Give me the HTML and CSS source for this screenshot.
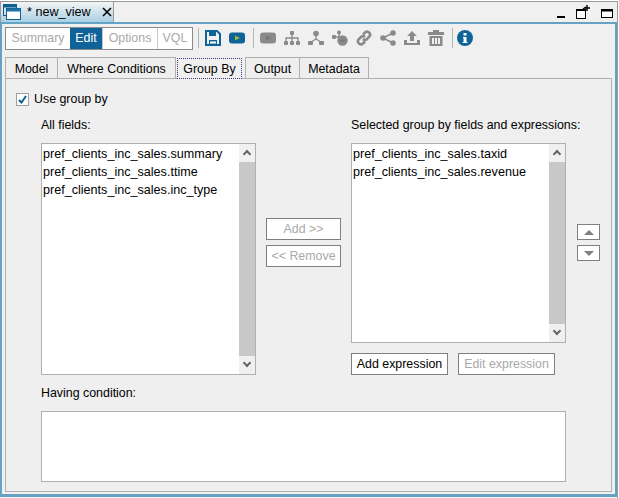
FILE: index.html
```html
<!DOCTYPE html>
<html lang="en">
<head>
    <meta charset="UTF-8">
    <title>new_view</title>
    <link rel="stylesheet" href="styles.css">
</head>
<body>
    <div class="window">
        <div class="title-bar">
            <div class="doc-tab">
                <svg class="doc-icon" width="18" height="18" viewBox="0 0 18 18">
                    <rect x="0.5" y="1.5" width="13" height="11" fill="#cfe3ee" stroke="#0f5f93"/>
                    <rect x="0.5" y="1.5" width="13" height="3" fill="#0f5f93"/>
                    <rect x="3.5" y="5.5" width="14" height="11" fill="#ffffff" stroke="#0f5f93"/>
                    <rect x="3.5" y="5.5" width="14" height="3" fill="#1d6fa5"/>
                </svg>
                <span class="doc-name">* new_view</span>
                <svg class="doc-close" width="10" height="10" viewBox="0 0 10 10">
                    <path d="M1 1 L9 9 M9 1 L1 9" stroke="#000" stroke-width="1.6"/>
                </svg>
            </div>
            <div class="win-controls">
                <svg width="9" height="4" viewBox="0 0 9 4"><rect y="1" width="8" height="2" fill="#000"/></svg>
                <svg width="15" height="14" viewBox="0 0 15 14">
                    <rect x="0.5" y="4.5" width="9" height="9" fill="#fff" stroke="#000"/>
                    <rect x="0" y="4" width="10" height="2" fill="#000"/>
                    <path d="M8 3 H14 M11 0 V6 M7 4 L10 2" stroke="#000" stroke-width="1.4"/>
                </svg>
                <svg width="12" height="10" viewBox="0 0 12 10">
                    <rect x="0.5" y="0.5" width="11" height="8" fill="#fff" stroke="#000"/>
                    <rect x="0" y="0" width="12" height="2.5" fill="#000"/>
                </svg>
            </div>
        </div>

        <div class="view">
            <div class="toolbar">
                <div class="modes">
                    <span class="mode mode-summary">Summary</span>
                    <span class="mode mode-edit active">Edit</span>
                    <span class="mode mode-options">Options</span>
                    <span class="mode mode-vql">VQL</span>
                </div>
                <span class="sep"></span>
                <svg class="tool tool-first" width="16" height="16" viewBox="0 0 16 16">
                    <path d="M1 1 H12 L15 4 V15 H1 Z" fill="none" stroke="#0f6399" stroke-width="2"/>
                    <rect x="4" y="1" width="7" height="5" fill="#0f6399"/>
                    <rect x="4" y="10" width="8" height="5" fill="#0f6399"/>
                    <rect x="5" y="11.500" width="6" height="2" fill="#fff"/>
                </svg>
                <svg class="tool" width="16" height="16" viewBox="0 0 16 16">
                    <rect x="0" y="2.500" width="16" height="11" rx="3" fill="#0f6399"/>
                    <path d="M6 5.500 L11 8 L6 10.500 Z" fill="#9ab832"/>
                </svg>
                <span class="sep sep-mid"></span>
                <svg class="tool" width="16" height="16" viewBox="0 0 16 16">
                    <rect x="0" y="2.500" width="16" height="11" rx="3" fill="#8a8a8a"/>
                    <path d="M6 5.500 L11 8 L6 10.500 Z" fill="#777"/>
                </svg>
                <svg class="tool" width="16" height="16" viewBox="0 0 16 16" fill="#8a8a8a">
                    <rect x="6" y="1" width="4" height="4" rx="1"/>
                    <rect x="0" y="11" width="4" height="4" rx="1"/>
                    <rect x="6" y="11" width="4" height="4" rx="1"/>
                    <rect x="12" y="11" width="4" height="4" rx="1"/>
                    <path d="M8 5 V11 M2 11 V8 H14 V11" fill="none" stroke="#8a8a8a" stroke-width="1.300"/>
                </svg>
                <svg class="tool" width="16" height="16" viewBox="0 0 16 16" fill="#8a8a8a">
                    <circle cx="8" cy="3.500" r="2.800"/>
                    <rect x="0" y="11" width="5" height="4" rx="1"/>
                    <rect x="11" y="11" width="5" height="4" rx="1"/>
                    <path d="M8 6 V9 M8 9 L3 12 M8 9 L13 12" fill="none" stroke="#8a8a8a" stroke-width="1.300"/>
                </svg>
                <svg class="tool" width="16" height="16" viewBox="0 0 16 16" fill="#8a8a8a">
                    <circle cx="7" cy="2.500" r="2"/>
                    <rect x="0" y="5" width="4" height="4" rx="1"/>
                    <circle cx="10.500" cy="10.500" r="5.200"/>
                    <path d="M7 4 V7 M3 7 H9" fill="none" stroke="#8a8a8a" stroke-width="1.300"/>
                    <rect x="8" y="9.700" width="5" height="1.600" fill="#777"/>
                </svg>
                <svg class="tool" width="16" height="16" viewBox="0 0 16 16" fill="none" stroke="#8a8a8a" stroke-width="2.600">
                    <path d="M7 4.500 L9.500 2 Q11 1 13 2.500 Q15 4.500 13.500 6.500 L10.500 9.500 Q8.500 10.500 7 9"/>
                    <path d="M9 11.500 L6.500 14 Q5 15 3 13.500 Q1 11.500 2.500 9.500 L5.500 6.500 Q7.500 5.500 9 7"/>
                </svg>
                <svg class="tool" width="16" height="16" viewBox="0 0 16 16" fill="#8a8a8a">
                    <circle cx="13" cy="3" r="2.800"/>
                    <circle cx="3" cy="8" r="2.800"/>
                    <circle cx="13" cy="13" r="2.800"/>
                    <path d="M13 3 L3 8 L13 13" fill="none" stroke="#8a8a8a" stroke-width="1.500"/>
                </svg>
                <svg class="tool" width="16" height="16" viewBox="0 0 16 16" fill="#8a8a8a">
                    <path d="M8 1 L13 6 H10 V11 H6 V6 H3 Z"/>
                    <path d="M0 10 H3 V13 H13 V10 H16 V15 H0 Z"/>
                </svg>
                <svg class="tool" width="16" height="16" viewBox="0 0 16 16" fill="#8a8a8a">
                    <rect x="5" y="0" width="6" height="2"/>
                    <rect x="0" y="2" width="16" height="3"/>
                    <path d="M1.500 6 H14.500 V16 H1.500 Z M4 8 V14 H6 V8 Z M7 8 V14 H9 V8 Z M10 8 V14 H12 V8 Z" fill-rule="evenodd"/>
                </svg>
                <span class="sep sep-info"></span>
                <svg class="tool tool-info" width="16" height="16" viewBox="0 0 16 16">
                    <circle cx="8" cy="8" r="8" fill="#0f6399"/>
                    <rect x="6.500" y="3" width="3" height="2.500" fill="#fff"/>
                    <path d="M6 7 H9.500 V12 H10.500 V13 H5.500 V12 H6.500 V8 H6 Z" fill="#fff"/>
                </svg>
            </div>

            <div class="tabs">
                <span class="tab tab-model">Model</span>
                <span class="tab tab-where">Where Conditions</span>
                <span class="tab tab-group active">Group By</span>
                <span class="tab tab-output">Output</span>
                <span class="tab tab-metadata">Metadata</span>
            </div>

            <div class="panel">
                <label class="use-group">
                    <span class="check">
                        <svg width="9" height="9" viewBox="0 0 9 9"><path d="M1 5 L3.500 7.500 L8 1" fill="none" stroke="#0f5f93" stroke-width="2"/></svg>
                    </span>
                    Use group by
                </label>

                <div class="fields">
                    <div class="col-all">
                        <div class="col-label">All fields:</div>
                        <div class="listbox listbox-all">
                            <ul>
                                <li>pref_clients_inc_sales.summary</li>
                                <li>pref_clients_inc_sales.ttime</li>
                                <li>pref_clients_inc_sales.inc_type</li>
                            </ul>
                            <div class="scroll">
                                <span class="arrow up"></span>
                                <span class="track"></span>
                                <span class="arrow down"></span>
                            </div>
                        </div>
                    </div>

                    <div class="col-move">
                        <button class="btn off move-btn">Add &gt;&gt;</button>
                        <button class="btn off move-btn">&lt;&lt; Remove</button>
                    </div>

                    <div class="col-selected">
                        <div class="col-label">Selected group by fields and expressions:</div>
                        <div class="listbox listbox-selected">
                            <ul>
                                <li>pref_clients_inc_sales.taxid</li>
                                <li>pref_clients_inc_sales.revenue</li>
                            </ul>
                            <div class="scroll">
                                <span class="arrow up"></span>
                                <span class="track"></span>
                                <span class="arrow down"></span>
                            </div>
                        </div>
                        <div class="expr-btns">
                            <button class="btn expr-btn">Add expression</button>
                            <button class="btn off expr-btn">Edit expression</button>
                        </div>
                    </div>

                    <div class="col-order">
                        <button class="btn order-btn"><span class="tri tri-up"></span></button>
                        <button class="btn order-btn"><span class="tri tri-down"></span></button>
                    </div>
                </div>

                <div class="having-label">Having condition:</div>
                <div class="having-box"></div>
            </div>
        </div>
    </div>
</body>
</html>
```

FILE: styles.css
```css
html, body {
    margin: 0;
    padding: 0;
}
body {
    width: 619px;
    height: 498px;
    box-sizing: border-box;
    padding-top: 1px;
    overflow: hidden;
    background-color: #ffffff;
    font-family: "Liberation Sans", Arial, sans-serif;
    font-size: 12.4px;
    color: #000;
}
.window {
    width: 618px;
    height: 497px;
    box-sizing: border-box;
    border-top: 1px solid #9a9a9a;
    border-right: 1px solid #9a9a9a;
    background-color: #f0f0f0;
}
.title-bar {
    height: 20px;
    display: flex;
    justify-content: space-between;
    border-left: 1px solid #9a9a9a;
}
.doc-tab {
    width: 113px;
    height: 20px;
    box-sizing: border-box;
    display: flex;
    align-items: center;
    background: linear-gradient(#f4f4f4, #a9d0e4);
    border-right: 1px solid #9a9a9a;
}
.doc-icon {
    margin-left: 2px;
    flex: none;
}
.doc-name {
    margin-left: 6px;
    font-size: 12.6px;
    white-space: nowrap;
    flex: none;
}
.doc-close {
    margin-left: 11px;
    flex: none;
}
.win-controls {
    display: flex;
    align-items: flex-end;
    gap: 10px;
    padding: 0 4px 3px 0;
}
.view {
    height: 475px;
    box-sizing: border-box;
    border: 2px solid #64a3c4;
    border-bottom-width: 3px;
    padding: 2px 3px 2px 3px;
    background-color: #f0f0f0;
}
.toolbar {
    height: 24px;
    display: flex;
    align-items: center;
}
.modes {
    width: 188px;
    height: 23px;
    box-sizing: border-box;
    display: flex;
    border: 1px solid #8a8a8a;
    background-color: #fff;
}
.mode {
    display: flex;
    align-items: center;
    justify-content: center;
    color: #a9a9a9;
    border-right: 1px solid #c8c8c8;
    box-sizing: border-box;
}
.mode-summary { width: 64px; border-right: none; }
.mode-edit { width: 33px; }
.mode-options { width: 55px; }
.mode-vql { width: 34px; border-right: none; }
.mode.active {
    background-color: #0f6399;
    color: #fff;
}
.sep {
    width: 1px;
    height: 20px;
    background-color: #b5b5b5;
    margin-left: 5px;
}
.sep-mid {
    margin-left: 8px;
    margin-right: 6px;
}
.sep-info {
    margin-left: 8px;
    margin-right: -4px;
}
.tool {
    margin-left: 8px;
    flex: none;
}
.sep-mid + .tool {
    margin-left: 0;
}
.tool-first {
    margin-left: 6px;
}
.tabs {
    height: 21px;
    margin-top: 7px;
    display: flex;
    align-items: flex-end;
    position: relative;
}
.tab {
    height: 21px;
    box-sizing: border-box;
    display: flex;
    align-items: center;
    justify-content: center;
    background-color: #eeeeee;
    border: 1px solid #b0b0b0;
    border-left: none;
    border-bottom: none;
    padding-top: 1px;
}
.tab-model { width: 53px; border-left: 1px solid #b0b0b0; }
.tab-where { width: 118px; }
.tab-group {
    width: 65px;
    margin-left: 1px;
    border: 1px dotted #3a3a7a;
    background-color: #f0f0f0;
    height: 21px;
    position: relative;
    top: 1px;
    z-index: 1;
}
.tab-output { width: 55px; margin-left: 3px; border-left: 1px solid #b0b0b0; }
.tab-metadata { width: 69px; }
.panel {
    height: 414px;
    box-sizing: border-box;
    border: 1px solid #b0b0b0;
    padding: 13px 0 0 35px;
    background-color: #efefef;
}
.use-group {
    margin-left: -25px;
    display: flex;
    align-items: center;
    gap: 5px;
    height: 14px;
}
.check {
    width: 13px;
    height: 13px;
    box-sizing: border-box;
    border: 1px solid #a0a0a0;
    background-color: #fff;
    display: flex;
    align-items: center;
    justify-content: center;
}
.fields {
    display: flex;
    margin-top: 12px;
}
.col-all {
    width: 215px;
}
.col-label {
    height: 14px;
    line-height: 14px;
    margin-bottom: 11px;
    white-space: nowrap;
}
.listbox {
    box-sizing: border-box;
    display: flex;
    border: 1px solid #b0b0b0;
    background-color: #fff;
}
.listbox-all {
    height: 232px;
}
.listbox-selected {
    height: 200px;
}
.listbox ul {
    flex: 1;
    margin: 0;
    padding: 1px 0 0 1px;
    list-style: none;
    overflow: hidden;
}
.listbox li {
    height: 18px;
    line-height: 18px;
    font-size: 12.6px;
    white-space: nowrap;
}
.scroll {
    width: 16px;
    display: flex;
    flex-direction: column;
    background-color: #f0f0f0;
}
.track {
    flex: 1;
    background-color: #c8c8c8;
}
.arrow {
    height: 18px;
    position: relative;
}
.arrow::before {
    content: "";
    position: absolute;
    left: 5px;
    width: 4px;
    height: 4px;
    border-left: 2px solid #666;
    border-top: 2px solid #666;
    box-sizing: content-box;
}
.arrow.up::before {
    top: 7px;
    transform: rotate(45deg);
}
.arrow.down::before {
    top: 4px;
    transform: rotate(225deg);
}
.col-move {
    width: 95px;
    display: flex;
    flex-direction: column;
    align-items: center;
    gap: 5px;
    padding-top: 100px;
}
.btn {
    box-sizing: border-box;
    margin: 0;
    padding: 0;
    height: 22px;
    border: 1px solid #7f7f7f;
    background-color: #fff;
    font-family: "Liberation Sans", Arial, sans-serif;
    font-size: 12.4px;
    color: #000;
}
.btn.off {
    color: #a9a9a9;
}
.move-btn {
    width: 75px;
}
.col-selected {
    width: 215px;
}
.expr-btns {
    display: flex;
    gap: 10px;
    margin-top: 10px;
}
.expr-btn {
    width: 97px;
}
.col-order {
    margin-left: 11px;
    display: flex;
    flex-direction: column;
    gap: 5px;
    padding-top: 106px;
}
.order-btn {
    width: 23px;
    height: 16px;
    display: flex;
    align-items: center;
    justify-content: center;
}
.tri {
    width: 0;
    height: 0;
    border-left: 5px solid transparent;
    border-right: 5px solid transparent;
}
.tri-up {
    border-bottom: 5px solid #808080;
}
.tri-down {
    border-top: 5px solid #808080;
}
.having-label {
    height: 14px;
    line-height: 14px;
    margin-top: 11px;
}
.having-box {
    width: 525px;
    height: 71px;
    box-sizing: border-box;
    margin-top: 11px;
    border: 1px solid #b0b0b0;
    background-color: #fff;
}
```
